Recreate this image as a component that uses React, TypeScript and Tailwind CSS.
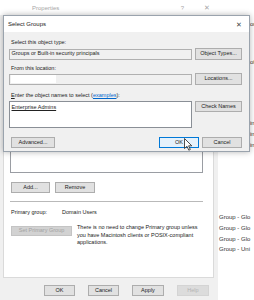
import clsx from "clsx";

const txt = "text-[5.5px] leading-none text-[#222]";

function Btn({
  children,
  className = "",
  kind = "normal",
}: {
  children: React.ReactNode;
  className?: string;
  kind?: "normal" | "primary" | "disabled" | "faded";
}) {
  return (
    <div
      className={clsx(
        "flex items-center justify-center border whitespace-nowrap text-[5.5px] leading-none shrink-0",
        kind === "primary" && "border-[#0078d7] bg-[#e5f1fb] text-[#222]",
        kind === "normal" && "border-[#adadad] bg-[#e1e1e1] text-[#222]",
        kind === "disabled" && "border-[#c4c4c4] bg-[#d2d2d2] text-[#a3a3a3]",
        kind === "faded" && "border-[#d4d4d4] bg-[#dcdcdc] text-[#b3b3b3]",
        className
      )}
    >
      {children}
    </div>
  );
}

function PropertiesWindow() {
  return (
    <div className="absolute left-0 top-0 w-[218px] h-[300px] bg-[#f0f0f0] flex flex-col">
      <div className="h-[15px] bg-white flex items-center text-[6px] leading-none text-[#a8a8a8]">
        <span className="ml-[32px]">Properties</span>
        <span className="ml-auto mr-[20px]">?</span>
        <span className="mr-[8px] text-[7px]">✕</span>
      </div>
      <div className="flex-1 flex flex-col pl-[3px] pr-[4px] pt-[15px]">
        <div className="flex-1 bg-white border border-[#dadada] pl-[6px] pt-[20px] flex flex-col">
          <div className="w-[193px] h-[122px] border border-[#9a9da3] bg-white" />
          <div className="flex gap-[5px] mt-[9px] ml-[1px]">
            <Btn className="w-[39px] h-[11px]">Add...</Btn>
            <Btn className="w-[40px] h-[11px]">Remove</Btn>
          </div>
          <div className="w-[193px] h-px bg-[#b9b9b9] mt-[8px]" />
          <div className={clsx("flex items-center h-[8px] mt-[7px] ml-[1px]", txt)}>
            <span className="w-[51px]">Primary group:</span>
            <span>Domain Users</span>
          </div>
          <div className="flex mt-[7px] ml-[1px]">
            <Btn kind="disabled" className="w-[61px] h-[10px] mt-[2px]">
              Set Primary Group
            </Btn>
            <div className="ml-[5px] text-[5.5px] leading-[7.5px] text-[#222] whitespace-nowrap">
              There is no need to change Primary group unless
              <br />
              you have Macintosh clients or POSIX-compliant
              <br />
              applications.
            </div>
          </div>
        </div>
        <div className="h-[22px] flex justify-end items-start pt-[7px] pr-[5px] gap-[13px]">
          <Btn className="w-[31px] h-[11px]">OK</Btn>
          <Btn className="w-[31px] h-[11px]">Cancel</Btn>
          <Btn className="w-[32px] h-[11px]">Apply</Btn>
          <Btn kind="faded" className="w-[32px] h-[11px]">Help</Btn>
        </div>
      </div>
    </div>
  );
}

function BackgroundList() {
  const rows = [
    { mt: "mt-[20px]", text: "on", ml: "ml-[32px]" },
    { mt: "mt-[30px]", text: "of", ml: "ml-[32px]" },
    { mt: "mt-[53px]", text: "in", ml: "ml-[32px]" },
    { mt: "mt-[3px]", text: "in", ml: "ml-[32px]" },
    { mt: "mt-[3px]", text: "in", ml: "ml-[32px]" },
    { mt: "mt-[64px]", text: "Group - Glo", ml: "ml-px" },
    { mt: "mt-[3px]", text: "Group - Glo", ml: "ml-px" },
    { mt: "mt-[3px]", text: "Group - Glo", ml: "ml-px" },
    { mt: "mt-[2px]", text: "Group - Uni", ml: "ml-px" },
  ];
  return (
    <div className="absolute left-[218px] top-0 w-[36px] h-[300px] bg-white overflow-hidden flex flex-col">
      {rows.map((r, i) => (
        <div
          key={i}
          className={clsx(
            "h-[8px] flex items-center whitespace-nowrap text-[6px] leading-none text-[#333]",
            r.mt,
            r.ml
          )}
        >
          {r.text}
        </div>
      ))}
    </div>
  );
}

function SelectGroupsDialog() {
  return (
    <div className="absolute left-[3px] top-[15px] w-[247px] h-[137px] border border-[#9aa3ad] bg-[#f0f0f0] shadow-[0_0_6px_rgba(0,0,0,0.3)] flex flex-col">
      <div className="h-[16px] bg-white flex items-center pl-[4px] text-[6px] leading-none text-[#222]">
        <span>Select Groups</span>
        <span className="ml-auto mr-[7px] text-[7px] text-[#444]">✕</span>
      </div>
      <div className="flex flex-col px-[5px] pt-[7px]">
        <div className={clsx("h-[8px] flex items-center ml-[2px]", txt)}>Select this object type:</div>
        <div className="flex items-center h-[12px] mt-[1px]">
          <div className={clsx("w-[183px] h-[11px] border border-[#b0b0b0] bg-[#f0f0f0] flex items-center pl-[1.5px]", txt)}>
            Groups or Built-in security principals
          </div>
          <Btn className="w-[47px] h-[12px] ml-[3px]">Object Types...</Btn>
        </div>
        <div className={clsx("h-[8px] flex items-center ml-[2px] mt-[5px]", txt)}>From this location:</div>
        <div className="flex items-center h-[12px]">
          <div className="w-[183px] h-[11px] border border-[#b0b0b0] bg-[#f0f0f0] flex items-center pl-[1px]">
            <div className="w-[45px] h-[8px] bg-white" />
          </div>
          <Btn className="w-[47px] h-[12px] ml-[3px]">Locations...</Btn>
        </div>
        <div className={clsx("h-[8px] flex items-center ml-[2px] mt-[7px] whitespace-nowrap", txt)}>
          <span>
            <span className="underline">E</span>nter the object names to select (
            <span className="text-[#0066cc] underline">examples</span>):
          </span>
        </div>
        <div className="flex items-start mt-[1px]">
          <div className={clsx("w-[183px] h-[27px] border border-[#8a8f96] bg-white pl-[1.5px] pt-[3px]", txt)}>
            <div className="underline h-[6px]">Enterprise Admins</div>
          </div>
          <Btn className="w-[47px] h-[11px] ml-[3px]">Check Names</Btn>
        </div>
        <div className="flex items-center mt-[9px] ml-[2px]">
          <Btn className="w-[44px] h-[11px]">Advanced...</Btn>
          <Btn kind="primary" className="w-[40px] h-[11px] ml-[104px]">OK</Btn>
          <Btn className="w-[40px] h-[11px] ml-[3px]">Cancel</Btn>
        </div>
      </div>
    </div>
  );
}

export default function App() {
  return (
    <div className="relative w-[254px] h-[300px] overflow-hidden bg-white font-['Liberation_Sans',Arial,sans-serif]">
      <BackgroundList />
      <PropertiesWindow />
      <SelectGroupsDialog />
      <svg
        className="absolute left-[184px] top-[138px]"
        width="9"
        height="13"
        viewBox="0 0 9 13"
      >
        <path
          d="M0.5 0.5 L0.5 10.5 L3 8.3 L4.8 12.2 L6.3 11.5 L4.6 7.8 L7.8 7.8 Z"
          fill="#fff"
          stroke="#222"
          strokeWidth="0.8"
          strokeLinejoin="round"
        />
      </svg>
    </div>
  );
}
